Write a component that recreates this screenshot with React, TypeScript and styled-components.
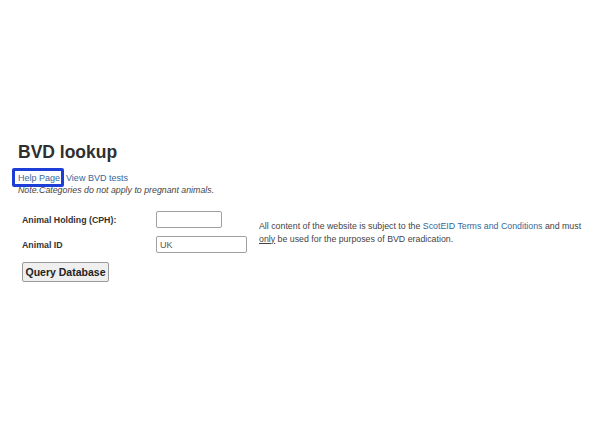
import React from "react";
import styled, { createGlobalStyle } from "styled-components";

const GlobalStyle = createGlobalStyle`
  body {
    margin: 0;
    background: #ffffff;
    font-family: "Liberation Sans", Arial, sans-serif;
    color: #333333;
  }
`;

const Page = styled.div`
  padding: 142px 0 0 18px;
`;

const Title = styled.h1`
  margin: 0;
  font-size: 17.5px;
  line-height: 20px;
  font-weight: bold;
  color: #2f2f2f;
`;

const LinkRow = styled.div`
  display: flex;
  gap: 6px;
  margin-top: 10px;
  font-size: 9px;
  line-height: 12px;
`;

const Link = styled.a<{ $highlight?: boolean }>`
  position: relative;
  color: #35689b;
  text-decoration: none;

  ${({ $highlight }) =>
    $highlight &&
    `
    &::after {
      content: "";
      position: absolute;
      left: -6px;
      right: -4px;
      top: -4px;
      bottom: -3px;
      border: 3px solid #1d3fd8;
      border-radius: 2px;
    }
  `}
`;

const Note = styled.div`
  font-size: 8.8px;
  line-height: 12px;
  font-style: italic;
  color: #444444;
`;

const FormGrid = styled.div`
  display: grid;
  grid-template-columns: 134px 103px 330px;
  grid-template-rows: 17px 17px auto;
  row-gap: 8px;
  margin: 15px 0 0 4px;
  align-items: center;
`;

const Label = styled.label`
  font-size: 8.8px;
  font-weight: bold;
  color: #333333;
`;

const Input = styled.input<{ $width: number }>`
  box-sizing: border-box;
  width: ${({ $width }) => $width}px;
  height: 17px;
  padding: 0 3px;
  border: 1px solid #a0a0a0;
  border-radius: 2px;
  font-family: "Liberation Sans", Arial, sans-serif;
  font-size: 9px;
  color: #555555;
  outline: none;
`;

const Disclaimer = styled.div`
  grid-column: 3;
  grid-row: 1 / 3;
  align-self: center;
  margin-top: 1px;
  font-size: 8.8px;
  line-height: 13px;
  color: #444444;
  white-space: nowrap;

  u {
    text-decoration: underline;
  }
`;

const Button = styled.button`
  grid-column: 1;
  grid-row: 3;
  justify-self: start;
  box-sizing: border-box;
  width: 87px;
  height: 20px;
  margin-top: 1px;
  padding: 0;
  background: #efefef;
  border: 1px solid #9a9a9a;
  border-radius: 2px;
  font-family: "Liberation Sans", Arial, sans-serif;
  font-size: 10.5px;
  font-weight: bold;
  color: #222222;
`;

export default function App() {
  return (
    <>
      <GlobalStyle />
      <Page>
        <Title>BVD lookup</Title>
        <LinkRow>
          <Link href="#" $highlight>
            Help Page
          </Link>
          <Link href="#">View BVD tests</Link>
        </LinkRow>
        <Note>Note.Categories do not apply to pregnant animals.</Note>
        <FormGrid>
          <Label>Animal Holding (CPH):</Label>
          <Input $width={66} />
          <Disclaimer>
            All content of the website is subject to the{" "}
            <Link href="#">ScotEID Terms and Conditions</Link> and must
            <br />
            <u>only</u> be used for the purposes of BVD eradication.
          </Disclaimer>
          <Label>Animal ID</Label>
          <Input $width={91} defaultValue="UK" />
          <Button>Query Database</Button>
        </FormGrid>
      </Page>
    </>
  );
}
